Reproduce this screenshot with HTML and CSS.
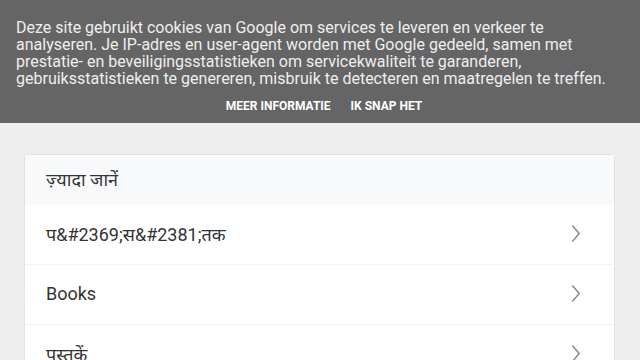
FILE: index.html
```html
<!DOCTYPE html>
<html lang="nl">
<head>
    <meta charset="UTF-8">
    <meta name="viewport" content="width=device-width, initial-scale=1.0">
    <title>ज़्यादा जानें</title>
    <link rel="stylesheet" href="styles.css">
</head>
<body>
    <div class="cookie-bar">
        <p class="cookie-text">Deze site gebruikt cookies van Google om services te leveren en verkeer te analyseren. Je IP-adres en user-agent worden met Google gedeeld, samen met prestatie- en beveiligingsstatistieken om servicekwaliteit te garanderen, gebruiksstatistieken te genereren, misbruik te detecteren en maatregelen te treffen.</p>
        <div class="cookie-actions">
            <a class="cookie-btn" href="#">Meer informatie</a>
            <a class="cookie-btn" href="#">Ik snap het</a>
        </div>
    </div>

    <div class="main">
        <div class="card">
            <div class="card-header">ज़्यादा जानें</div>
            <a class="card-item" href="#">
                <span>प&amp;#2369;स&amp;#2381;तक</span>
                <svg class="chevron" viewBox="0 0 10 18"><path d="M2 1.5l6.5 7.5-6.5 7.5"/></svg>
            </a>
            <a class="card-item" href="#">
                <span>Books</span>
                <svg class="chevron" viewBox="0 0 10 18"><path d="M2 1.5l6.5 7.5-6.5 7.5"/></svg>
            </a>
            <a class="card-item" href="#">
                <span>पुस्तकें</span>
                <svg class="chevron" viewBox="0 0 10 18"><path d="M2 1.5l6.5 7.5-6.5 7.5"/></svg>
            </a>
        </div>
    </div>
</body>
</html>
```

FILE: styles.css
```css
body {
    margin: 0;
    font-family: Roboto, "Noto Sans", sans-serif;
    background-color: #eeeeee;
    color: #333;
}
.cookie-bar {
    background-color: #656565;
    color: #eeeeee;
    padding: 19px 16px 0;
    height: 104px;
}
.cookie-text {
    margin: 0;
    font-size: 16px;
    line-height: 17px;
}
.cookie-actions {
    display: flex;
    justify-content: center;
    gap: 20px;
    margin-top: 12px;
    padding-left: 8px;
}
.cookie-btn {
    color: #ffffff;
    text-decoration: none;
    text-transform: uppercase;
    font-size: 12px;
    font-weight: 700;
    line-height: 14px;
}
.main {
    padding: 31px 25px 0 24px;
}
.card {
    background: white;
    border: 1px solid #e2e2e2;
    border-radius: 3px;
}
.card-header {
    background-color: #f8f9fa;
    height: 50px;
    line-height: 50px;
    padding: 0 21px;
    font-size: 18px;
    color: #333;
}
.card-item {
    display: flex;
    align-items: center;
    justify-content: space-between;
    height: 57px;
    padding: 0 33px 2px 21px;
    border-top: 1px solid #f2f2f2;
    color: #333;
    text-decoration: none;
    font-size: 18px;
}
.card-item:first-of-type {
    border-top: none;
}
.chevron {
    width: 11px;
    height: 19px;
    fill: none;
    stroke: #8a8a8a;
    stroke-width: 1.4;
}
```
